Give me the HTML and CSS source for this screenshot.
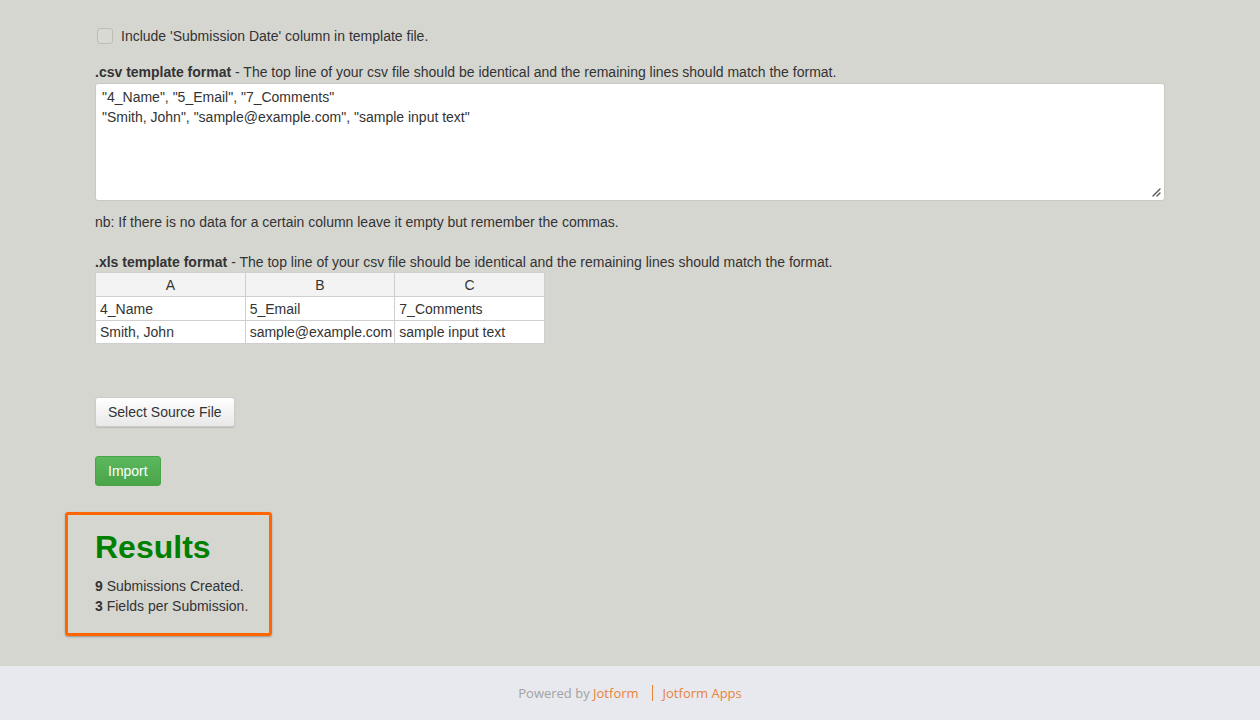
FILE: index.html
```html
<!DOCTYPE html>
<html lang="en">
<head>
<meta charset="utf-8">
<title>Import Submissions</title>
<link rel="stylesheet" href="styles.css">
</head>
<body>
<main class="page">
  <section class="content">
    <label class="check-row">
      <span class="checkbox"></span>
      <span>Include 'Submission Date' column in template file.</span>
    </label>

    <p class="label"><b>.csv template format</b> - The top line of your csv file should be identical and the remaining lines should match the format.</p>
    <div class="textarea">
      <div>"4_Name", "5_Email", "7_Comments"</div>
      <div>"Smith, John", "sample@example.com", "sample input text"</div>
      <svg class="grip" width="10" height="10" viewBox="0 0 10 10"><path d="M9 2 L2 9 M9 6 L6 9" stroke="#555" stroke-width="1.4" stroke-linecap="round"/></svg>
    </div>
    <p class="note">nb: If there is no data for a certain column leave it empty but remember the commas.</p>

    <p class="label xls"><b>.xls template format</b> - The top line of your csv file should be identical and the remaining lines should match the format.</p>
    <table class="sheet">
      <thead>
        <tr><th>A</th><th>B</th><th>C</th></tr>
      </thead>
      <tbody>
        <tr><td>4_Name</td><td>5_Email</td><td>7_Comments</td></tr>
        <tr class="last"><td>Smith, John</td><td>sample@example.com</td><td>sample input text</td></tr>
      </tbody>
    </table>

    <button class="btn btn-file">Select Source File</button>
    <button class="btn btn-import">Import</button>

    <div class="results">
      <h2>Results</h2>
      <div><b>9</b> Submissions Created.</div>
      <div><b>3</b> Fields per Submission.</div>
    </div>
  </section>
</main>
<footer class="footer">
  <span class="muted">Powered by</span>&nbsp;<span class="brand">Jotform</span>
  <span class="sep"></span>
  <span class="brand">Jotform Apps</span>
</footer>
</body>
</html>
```

FILE: styles.css
```css
html, body {
  margin: 0;
  padding: 0;
}
body {
  background: #d6d6d1;
  font-family: "Liberation Sans", Arial, sans-serif;
  font-size: 14px;
  color: #333;
  width: 1260px;
  height: 720px;
  display: flex;
  flex-direction: column;
}
.page {
  flex: 1;
}
.content {
  width: 1070px;
  margin-left: 95px;
  padding-top: 27px;
}
.check-row {
  display: flex;
  align-items: center;
  gap: 8px;
  height: 18px;
  padding-left: 2px;
}
.checkbox {
  width: 14px;
  height: 14px;
  border: 1px solid #bdbdb8;
  border-radius: 3px;
  background: #d9d9d4;
}
.label {
  margin: 17px 0 1px;
  line-height: 20px;
}
.textarea {
  position: relative;
  background: #fff;
  border: 1px solid #c9c9c4;
  border-radius: 3px;
  height: 107px;
  padding: 3px 6px 6px;
  line-height: 20px;
}
.grip {
  position: absolute;
  right: 3px;
  bottom: 3px;
}
.note {
  margin: 11px 0 0;
  line-height: 20px;
}
.label.xls {
  margin-top: 20px;
  margin-bottom: 0;
}
.sheet {
  border-collapse: collapse;
  table-layout: fixed;
  width: 450px;
  margin-top: 0;
}
.sheet th, .sheet td {
  border: 1px solid #cfcfcf;
  background: #fff;
  height: 23px;
  padding: 0 4px;
  font-weight: normal;
  text-align: left;
  color: #333;
  white-space: nowrap;
  overflow: hidden;
  box-sizing: border-box;
}
.sheet .last td {
  height: 23px;
}
.sheet th {
  background: #f3f3f3;
  text-align: center;
  height: 24px;
}
.sheet td {
  height: 24px;
}
.btn {
  display: block;
  font-family: "Liberation Sans", Arial, sans-serif;
  font-size: 14px;
  border-radius: 3px;
  cursor: pointer;
}
.btn-file {
  margin-top: 53px;
  height: 30px;
  padding: 0 12px;
  color: #333;
  background: linear-gradient(#ffffff, #e8e8e8);
  border: 1px solid #ccc;
  box-shadow: 0 1px 1px rgba(0,0,0,0.12);
}
.btn-import {
  margin-top: 29px;
  height: 30px;
  padding: 0 12px;
  color: #fff;
  background: linear-gradient(#5cb85c, #4aa54a);
  border: 1px solid #47a447;
}
.results {
  margin: 26px 0 0 -30px;
  width: 174px;
  padding: 12px 0 17px 27px;
  border: 3px solid #ff6600;
  border-radius: 3px;
  box-shadow: 0 1px 2px rgba(0,0,0,0.3);
  line-height: 20px;
}
.results h2 {
  margin: 0 0 9px;
  color: #008000;
  font-size: 32px;
  line-height: 40px;
  font-weight: bold;
}
.footer {
  height: 54px;
  background: #e8e9ee;
  display: flex;
  align-items: center;
  justify-content: center;
  font-family: "Open Sans", sans-serif;
  font-size: 13px;
}
.footer .muted {
  color: #a3a3a3;
}
.footer .brand {
  color: #e8833a;
}
.footer .sep {
  width: 1px;
  height: 16px;
  background: #e8833a;
  margin: 0 10px 0 13px;
}
```
